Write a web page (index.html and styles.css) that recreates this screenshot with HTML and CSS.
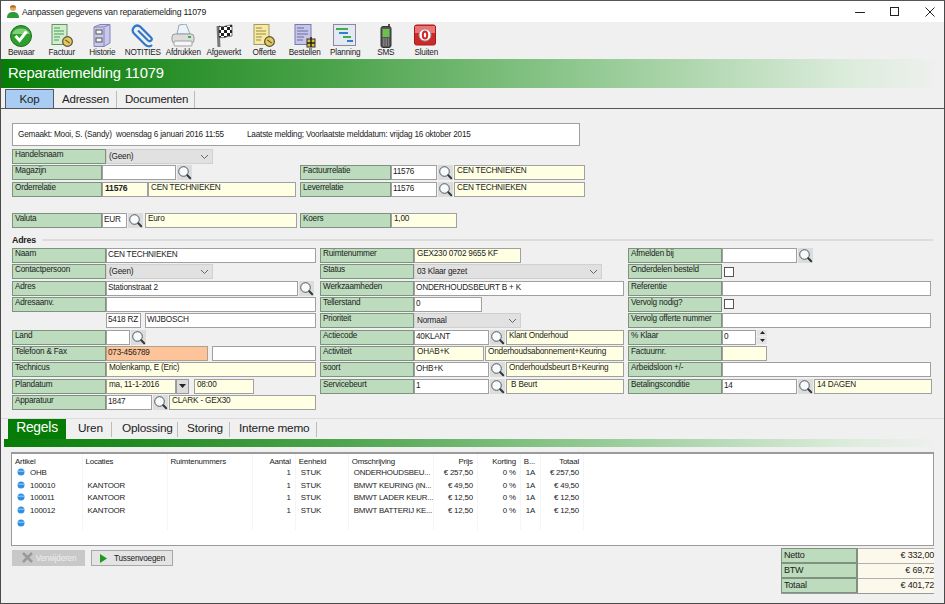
FILE: index.html
```html
<!DOCTYPE html>
<html lang="nl">
<head>
<meta charset="utf-8">
<title>Aanpassen gegevens van reparatiemelding 11079</title>
<link rel="stylesheet" href="styles.css">
</head>
<body>
<svg class="defs" width="0" height="0">
  <defs>
    <symbol id="mag" viewBox="0 0 15 15">
      <circle cx="6.500" cy="6.500" r="4.800" fill="#f6fafc" stroke="#50585c" stroke-width="1"/>
      <path d="M10.300 10.300l2.900 2.900" stroke="#30383c" stroke-width="2" stroke-linecap="round"/>
    </symbol>
    <symbol id="chev" viewBox="0 0 9 6">
      <path d="M1 1l3.500 3.500L8 1" fill="none" stroke="#666" stroke-width="1"/>
    </symbol>
    <symbol id="dot" viewBox="0 0 8 8">
      <circle cx="4" cy="4" r="3.500" fill="#2f8fe6"/>
      <path d="M1 3.200h6" stroke="#9fd0f8" stroke-width="1"/>
    </symbol>
    <symbol id="coin" viewBox="0 0 10 10">
      <circle cx="5" cy="5" r="4.400" fill="#e6c85c" stroke="#54503a" stroke-width="1.100"/>
      <path d="M3 3.500l4 3" stroke="#54503a" stroke-width="1"/>
    </symbol>
    <pattern id="chk" width="6" height="6" patternUnits="userSpaceOnUse">
      <rect width="6" height="6" fill="#fff"/>
      <path d="M0 0h3v3H0zM3 3h3v3H3z" fill="#222"/>
    </pattern>
  </defs>
</svg>
<div class="win">
  <header class="titlebar">
    <svg class="appicon" width="14" height="15" viewBox="0 0 14 15"><circle cx="7" cy="4" r="3" fill="#e0a868"/><path d="M4 3.500C4 .5 10 .5 10 3.500z" fill="#b86a20"/><path d="M1 14c0-5 3-6 6-6s6 1 6 6z" fill="#2f9a3a"/></svg>
    <span class="wintitle">Aanpassen gegevens van reparatiemelding 11079</span>
    <div class="winbtns">
      <svg width="10" height="10" viewBox="0 0 10 10"><path d="M0 5.500h10" stroke="#222"/></svg>
      <svg width="10" height="10" viewBox="0 0 10 10"><rect x=".5" y=".5" width="8" height="8" fill="none" stroke="#222"/></svg>
      <svg width="10" height="10" viewBox="0 0 10 10"><path d="M.5.5l9 9M9.500.5l-9 9" stroke="#222"/></svg>
    </div>
  </header>

  <nav class="toolbar">
    <div class="tool"><svg width="24" height="24" viewBox="0 0 24 24"><circle cx="12" cy="12" r="10.500" fill="#2f9e2f" stroke="#1c701c"/><path d="M3 10a9.500 8 0 0 1 18 0z" fill="#7fd07a"/><path d="M6.500 12l4 4.500 7-9" fill="none" stroke="#fff" stroke-width="3"/></svg><span>Bewaar</span></div>
    <div class="tool"><svg width="24" height="24" viewBox="0 0 24 24"><rect x="2" y=".5" width="15" height="20" fill="#d6ecd2" stroke="#5a9a5a"/><path d="M4 4h6M4 7h10M4 10h10M4 13h6M4 16h5" stroke="#3f9f4f"/><use href="#coin" x="12" y="12" width="11" height="11"/></svg><span>Factuur</span></div>
    <div class="tool"><svg width="24" height="24" viewBox="0 0 24 24"><path d="M4 3l6-2.500h10V19l-6 3.500H4z" fill="#c8c8ee" stroke="#8484b4"/><path d="M14 4v18M4 3h10l6-2.500" fill="none" stroke="#8484b4"/><rect x="6" y="6" width="6" height="4" fill="#f4f4f4" stroke="#555"/><rect x="6" y="14" width="6" height="4" fill="#f4f4f4" stroke="#555"/></svg><span>Historie</span></div>
    <div class="tool"><svg width="24" height="24" viewBox="0 0 24 24"><path d="M21 21.500c-2 2-5 1.500-7-.5L3 10C0 7 3-.5 9 3l11 11c2 2-.5 5-3 3L7 7" transform="translate(0 -.5)" fill="none" stroke="#3278c8" stroke-width="2.200"/></svg><span>NOTITIES</span></div>
    <div class="tool"><svg width="24" height="24" viewBox="0 0 24 24"><path d="M6 10L8 1l7-1 4 10z" fill="#eaf4fb" stroke="#98a8b4"/><rect x="1" y="10" width="22" height="9" rx="3" fill="#dcdcdc" stroke="#9a9a9a"/><rect x="3" y="17" width="18" height="5" rx="1" fill="#f6f6f6" stroke="#a0a0a0"/><rect x="17" y="12" width="3" height="2" fill="#3fb04f"/></svg><span>Afdrukken</span></div>
    <div class="tool"><svg width="24" height="24" viewBox="0 0 24 24"><path d="M6 2l1 21" stroke="#7a7a7a" stroke-width="3"/><path d="M7 2c4 2 8-1 13-1v11c-5 0-9 3-13 1z" fill="url(#chk)" stroke="#333" stroke-width=".7"/></svg><span>Afgewerkt</span></div>
    <div class="tool"><svg width="24" height="24" viewBox="0 0 24 24"><rect x="2" y=".5" width="15" height="20" fill="#f6eaa8" stroke="#a8985a"/><path d="M4 4h6M4 7h10M4 10h10M4 13h6M4 16h5" stroke="#a08a40"/><use href="#coin" x="12" y="12" width="11" height="11"/></svg><span>Offerte</span></div>
    <div class="tool"><svg width="24" height="24" viewBox="0 0 24 24"><rect x="2" y=".5" width="16" height="20" fill="#c6c6e8" stroke="#7a7aa8"/><path d="M4 4h7M4 7h11M4 10h11M4 13h7M4 16h6" stroke="#6a6a9c"/><rect x="14" y="15" width="8" height="8" fill="#e0c030" stroke="#333"/><path d="M18 13v10M14 19h8" stroke="#222" stroke-width="1.500"/></svg><span>Bestellen</span></div>
    <div class="tool"><svg width="24" height="24" viewBox="0 0 24 24"><rect x=".5" y=".5" width="22" height="21" fill="#e4e8f2" stroke="#8a8a9a"/><path d="M3 5h12" stroke="#3cae4a" stroke-width="2"/><path d="M6 9h9" stroke="#3080d0" stroke-width="2"/><path d="M10 13h8" stroke="#3cae4a" stroke-width="2"/><path d="M14 17h6" stroke="#3080d0" stroke-width="2"/></svg><span>Planning</span></div>
    <div class="tool"><svg width="24" height="24" viewBox="0 0 24 24"><path d="M14 0h2v3h-2z" fill="#555"/><rect x="7" y="2.500" width="10" height="21" rx="2" fill="#555" stroke="#333"/><rect x="8.500" y="5" width="7" height="8" fill="#6cc04c"/><path d="M9 15h6M9 17h6M9 19h6M9 21h6" stroke="#aaa" stroke-dasharray="1.500 1"/></svg><span>SMS</span></div>
    <div class="tool"><svg width="24" height="24" viewBox="0 0 24 24"><rect x=".5" y="1" width="21" height="20" rx="2" fill="#d02828" stroke="#a01c1c"/><path d="M1 2h20v7H1z" fill="#ee7474"/><circle cx="11" cy="11" r="6" fill="#fff" stroke="#999"/><ellipse cx="11" cy="11" rx="2.200" ry="3.500" fill="none" stroke="#d02828" stroke-width="2"/></svg><span>Sluiten</span></div>
  </nav>

  <div class="banner">Reparatiemelding 11079</div>

  <div class="tabs">
    <div class="tab on">Kop</div>
    <div class="tab t-adr">Adressen</div>
    <div class="tab t-doc">Documenten</div>
  </div>

  <main class="form">
    <div class="info"><span class="i1">Gemaakt: Mooi, S. (Sandy)</span><span class="i2">woensdag 6 januari 2016 11:55</span><span class="i3">Laatste melding; Voorlaatste melddatum: vrijdag 16 oktober 2015</span></div>

    <div class="top">
      <div class="col">
        <div class="r"><div class="f l w94">Handelsnaam</div><div class="f s w107">(Geen)<svg class="chev"><use href="#chev"/></svg></div></div>
        <div class="r"><div class="f l w90">Magazijn</div><div class="f w w74"></div><div class="m"><svg><use href="#mag"/></svg></div></div>
        <div class="r"><div class="f l w90">Orderrelatie</div><div class="f y w46 b">11576</div><div class="f y w148">CEN TECHNIEKEN</div></div>
        <div class="spacer"></div>
        <div class="r"><div class="f l w90">Valuta</div><div class="f w w25">EUR</div><div class="m"><svg><use href="#mag"/></svg></div><div class="f y w152 ml1">Euro</div></div>
      </div>
      <div class="col">
        <div class="r"></div>
        <div class="r"><div class="f l w91">Factuurrelatie</div><div class="f w w46">11576</div><div class="m"><svg><use href="#mag"/></svg></div><div class="f y w131">CEN TECHNIEKEN</div></div>
        <div class="r"><div class="f l w91">Leverrelatie</div><div class="f w w46">11576</div><div class="m"><svg><use href="#mag"/></svg></div><div class="f y w131">CEN TECHNIEKEN</div></div>
        <div class="spacer"></div>
        <div class="r"><div class="f l w91">Koers</div><div class="f y w66">1,00</div></div>
      </div>
    </div>

    <div class="section"><b>Adres</b><i></i></div>

    <div class="three">
      <div class="col">
        <div class="r"><div class="f l w94">Naam</div><div class="f w w210">CEN TECHNIEKEN</div></div>
        <div class="r"><div class="f l w94">Contactpersoon</div><div class="f s w107">(Geen)<svg class="chev"><use href="#chev"/></svg></div></div>
        <div class="r"><div class="f l w94">Adres</div><div class="f w w192">Stationstraat 2</div><div class="m"><svg><use href="#mag"/></svg></div></div>
        <div class="r"><div class="f l w94">Adresaanv.</div><div class="f w w210"></div></div>
        <div class="r"><div class="blank w94"></div><div class="f w w35">5418 RZ</div><div class="f w w171 ml4">WIJBOSCH</div></div>
        <div class="r"><div class="f l w94">Land</div><div class="f w w24"></div><div class="m"><svg><use href="#mag"/></svg></div></div>
        <div class="r"><div class="f l w94">Telefoon &amp; Fax</div><div class="f o w102">073-456789</div><div class="f w w104 ml4"></div></div>
        <div class="r"><div class="f l w94">Technicus</div><div class="f y w210">Molenkamp, E (Eric)</div></div>
        <div class="r"><div class="f l w94">Plandatum</div><div class="f y w70">ma, 11-1-2016</div><div class="drop"><svg width="7" height="4" viewBox="0 0 7 4"><path d="M0 0h7L3.500 4z" fill="#222"/></svg></div><div class="f y w60 ml5">08:00</div></div>
        <div class="r"><div class="f l w94">Apparatuur</div><div class="f w w46">1847</div><div class="m"><svg><use href="#mag"/></svg></div><div class="f y w147">CLARK - GEX30</div></div>
      </div>
      <div class="col">
        <div class="r"><div class="f l w94">Ruimtenummer</div><div class="f y w107">GEX230 0702 9655 KF</div></div>
        <div class="r"><div class="f l w94">Status</div><div class="f s w188">03 Klaar gezet<svg class="chev"><use href="#chev"/></svg></div></div>
        <div class="r"><div class="f l w94">Werkzaamheden</div><div class="f w w210">ONDERHOUDSBEURT B + K</div></div>
        <div class="r"><div class="f l w94">Tellerstand</div><div class="f w w68">0</div></div>
        <div class="r"><div class="f l w94">Prioriteit</div><div class="f s w107">Normaal<svg class="chev"><use href="#chev"/></svg></div></div>
        <div class="r"><div class="f l w94">Actiecode</div><div class="f w w75">40KLANT</div><div class="m"><svg><use href="#mag"/></svg></div><div class="f y w118">Klant Onderhoud</div></div>
        <div class="r"><div class="f l w94">Activiteit</div><div class="f y w70">OHAB+K</div><div class="f y w139 ml1">Onderhoudsabonnement+Keuring</div></div>
        <div class="r"><div class="f l w94">soort</div><div class="f w w75">OHB+K</div><div class="m"><svg><use href="#mag"/></svg></div><div class="f y w118">Onderhoudsbeurt B+Keuring</div></div>
        <div class="r"><div class="f l w94">Servicebeurt</div><div class="f w w75">1</div><div class="m"><svg><use href="#mag"/></svg></div><div class="f y w118">&nbsp;B Beurt</div></div>
      </div>
      <div class="col">
        <div class="r"><div class="f l w94">Afmelden bij</div><div class="f w w75">&nbsp;</div><div class="m"><svg><use href="#mag"/></svg></div></div>
        <div class="r"><div class="f l w94">Onderdelen besteld</div><div class="chk"></div></div>
        <div class="r"><div class="f l w94">Referentie</div><div class="f w w209"></div></div>
        <div class="r"><div class="f l w94">Vervolg nodig?</div><div class="chk"></div></div>
        <div class="r"><div class="f l w94">Vervolg offerte nummer</div><div class="f w w209"></div></div>
        <div class="r"><div class="f l w94">% Klaar</div><div class="f w w34">0</div><div class="spin"><span><svg width="5" height="3" viewBox="0 0 5 3"><path d="M0 3h5L2.500 0z" fill="#222"/></svg></span><span><svg width="5" height="3" viewBox="0 0 5 3"><path d="M0 0h5L2.500 3z" fill="#222"/></svg></span></div></div>
        <div class="r"><div class="f l w94">Factuurnr.</div><div class="f y w45"></div></div>
        <div class="r"><div class="f l w94">Arbeidsloon +/-</div><div class="f w w209"></div></div>
        <div class="r"><div class="f l w94">Betalingsconditie</div><div class="f w w75">14</div><div class="m"><svg><use href="#mag"/></svg></div><div class="f y w118">14 DAGEN</div></div>
      </div>
    </div>
  </main>

  <section class="lower">
    <div class="ltabs">
      <div class="ltab on">Regels</div>
      <div class="ltab l-uren">Uren</div>
      <div class="ltab l-opl">Oplossing</div>
      <div class="ltab l-sto">Storing</div>
      <div class="ltab l-int">Interne memo</div>
    </div>
    <div class="gbar"></div>
    <div class="grid">
      <table>
        <colgroup><col class="c1"><col class="c2"><col class="c3"><col class="c4"><col class="c5"><col class="c6"><col class="c7"><col class="c8"><col class="c9"><col class="c10"></colgroup>
        <thead><tr><th>Artikel</th><th>Locaties</th><th>Ruimtenummers</th><th class="n">Aantal</th><th>Eenheid</th><th>Omschrijving</th><th class="n">Prijs</th><th class="n">Korting</th><th>B...</th><th class="n">Totaal</th></tr></thead>
        <tbody>
          <tr><td class="first"><svg class="dot"><use href="#dot"/></svg>OHB</td><td></td><td></td><td class="n">1</td><td>STUK</td><td>ONDERHOUDSBEU...</td><td class="n">€ 257,50</td><td class="n">0 %</td><td>1A</td><td class="n">€ 257,50</td></tr>
          <tr><td class="first"><svg class="dot"><use href="#dot"/></svg>100010</td><td>KANTOOR</td><td></td><td class="n">1</td><td>STUK</td><td>BMWT KEURING (IN...</td><td class="n">€ 49,50</td><td class="n">0 %</td><td>1A</td><td class="n">€ 49,50</td></tr>
          <tr><td class="first"><svg class="dot"><use href="#dot"/></svg>100011</td><td>KANTOOR</td><td></td><td class="n">1</td><td>STUK</td><td>BMWT LADER KEUR...</td><td class="n">€ 12,50</td><td class="n">0 %</td><td>1A</td><td class="n">€ 12,50</td></tr>
          <tr><td class="first"><svg class="dot"><use href="#dot"/></svg>100012</td><td>KANTOOR</td><td></td><td class="n">1</td><td>STUK</td><td>BMWT BATTERIJ KE...</td><td class="n">€ 12,50</td><td class="n">0 %</td><td>1A</td><td class="n">€ 12,50</td></tr>
          <tr><td class="first"><svg class="dot"><use href="#dot"/></svg></td><td></td><td></td><td></td><td></td><td></td><td></td><td></td><td></td><td></td></tr>
        </tbody>
      </table>
    </div>
    <div class="foot">
      <div class="btn off"><svg width="13" height="12" viewBox="0 0 13 12"><path d="M2 1l9 9M11 1L2 10" stroke="#9a9a9a" stroke-width="2.500"/></svg>Verwijderen</div>
      <div class="btn"><svg width="9" height="9" viewBox="0 0 9 9"><path d="M1 0l7 4.500L1 9z" fill="#1f9a1f"/></svg>Tussenvoegen</div>
      <div class="totals">
        <div class="tr"><div class="tl">Netto</div><div class="tv">€ 332,00</div></div>
        <div class="tr"><div class="tl">BTW</div><div class="tv">€ 69,72</div></div>
        <div class="tr"><div class="tl">Totaal</div><div class="tv">€ 401,72</div></div>
      </div>
    </div>
  </section>
</div>
</body>
</html>
```

FILE: styles.css
```css
* { box-sizing: border-box; }
html, body { margin: 0; padding: 0; }
body { font-family: "Liberation Sans", Arial, sans-serif; font-size: 8.200px; letter-spacing: -.2px; color: #222; background: #f0f0f0; overflow: hidden; }
.defs { position: absolute; }
.win { width: 945px; height: 604px; border: 1px solid #4a4a4a; border-top-color: #555; display: flex; flex-direction: column; background: #f0f0f0; overflow: hidden; }

.titlebar { height: 21px; flex: none; background: #fff; display: flex; align-items: center; padding-left: 5px; }
.appicon { margin-right: 2px; flex: none; }
.wintitle { font-size: 8.700px; color: #222; }
.winbtns { margin-left: auto; display: flex; gap: 25px; padding-right: 9px; }

.toolbar { height: 37px; flex: none; display: flex; background: #f0f0f0; padding-top: 2px; }
.tool { width: 40.500px; flex: none; display: flex; flex-direction: column; align-items: center; }
.tool svg { flex: none; height: 24px; width: 24px; display: block; }
.tool span { white-space: nowrap; font-size: 8.200px; line-height: 10px; }

.banner { height: 29px; flex: none; background: linear-gradient(90deg, #067c06 0%, #4ba34b 35%, #8cc68c 60%, #dcecdc 90%, #f0f0f0 100%); color: #fff; font-size: 14.800px; line-height: 28px; padding-left: 7px; white-space: nowrap; }

.tabs { height: 21px; flex: none; display: flex; align-items: flex-end; border-bottom: 1px solid #555; padding-left: 4px; font-size: 11.500px; color: #222; }
.tab { height: 17px; line-height: 16px; }
.tab.on { width: 49px; height: 19px; line-height: 19px; background: #a9cdf2; border: 1px solid #556; border-bottom: 0; text-align: center; }
.t-adr { margin-left: 8px; padding-right: 7px; border-right: 1px solid #bbb; width: 55px; }
.t-doc { margin-left: 8px; padding-right: 7px; border-right: 1px solid #bbb; width: 70px; }

.form { flex: none; padding: 14px 0 0 11px; height: 309px; }
.info { width: 568px; height: 23px; background: #fff; border: 1px solid #a0a0a0; line-height: 21px; padding-left: 5px; margin-bottom: 3px; display: flex; white-space: nowrap; }
.i1 { width: 98px; }
.i2 { width: 131px; }

.top { display: grid; grid-template-columns: 288px 1fr; }
.three { display: grid; grid-template-columns: 308px 308px 308px; }
.col { display: flex; flex-direction: column; }
.r { display: flex; height: 16.330px; align-items: flex-start; }
.spacer { height: 15px; }
.section { height: 18.700px; width: 921px; display: flex; align-items: center; gap: 6px; padding-top: 3px; }
.section b { font-size: 8.800px; }
.section i { flex: 1; height: 2px; background: #dcdcdc; display: block; }

.f { height: 15px; border: 1px solid #9a9a9a; line-height: 12px; padding-left: 1px; overflow: hidden; white-space: nowrap; flex: none; position: relative; }
.l { background: #bddbbd; border-color: #7f917f; line-height: 10px; padding-left: 2px; }
.w { background: #fff; border-color: #a0a0a0; }
.y { background: #ffffe4; border-color: #a0a0a0; line-height: 10px; padding-left: 2px; }
.o { background: #fdc49a; border-color: #b0a090; }
.s { background: #e1e1e1; border-color: #d0d0d0; padding-left: 2px; line-height: 14px; }
.b { font-weight: 700; font-size: 8.600px; }
.blank { flex: none; }
.chev { position: absolute; right: 3px; top: 4px; width: 9px; height: 6px; }
.m { width: 15px; height: 15px; background: #dcdcdc; margin: 0 1px; flex: none; }
.m svg { width: 15px; height: 15px; display: block; }
.drop { width: 13px; height: 15px; background: #dcdcdc; border: 1px solid #999; flex: none; display: flex; align-items: center; justify-content: center; }
.chk { width: 10px; height: 10px; border: 1px solid #555; background: #fff; margin: 2.500px 0 0 2px; flex: none; }
.spin { width: 10px; height: 14px; margin-left: 1px; display: flex; flex-direction: column; gap: 1px; flex: none; }
.spin span { height: 6.500px; background: #e4e4e4; display: flex; align-items: center; justify-content: center; }
.spin svg { display: block; }

.ml1 { margin-left: 1px; }
.ml4 { margin-left: 4px; }
.ml5 { margin-left: 5px; }
.w24 { width: 24px; } .w25 { width: 25px; } .w34 { width: 34px; } .w35 { width: 35px; }
.w45 { width: 45px; } .w46 { width: 46px; } .w60 { width: 60px; } .w66 { width: 66px; }
.w68 { width: 68px; } .w70 { width: 70px; } .w74 { width: 74px; } .w75 { width: 75px; }
.w90 { width: 90px; } .w91 { width: 91px; } .w94 { width: 94px; } .w102 { width: 102px; }
.w104 { width: 104px; } .w107 { width: 107px; } .w118 { width: 118px; } .w131 { width: 131px; }
.w139 { width: 139px; } .w147 { width: 147px; } .w148 { width: 148px; } .w152 { width: 152px; }
.w171 { width: 171px; } .w188 { width: 188px; } .w192 { width: 192px; } .w209 { width: 209px; } .w210 { width: 210px; }

.lower { flex: 1; display: flex; flex-direction: column; min-height: 0; }
.ltabs { height: 21px; flex: none; display: flex; align-items: flex-end; border-top: 1px solid #dcdcdc; padding-left: 7px; font-size: 11.800px; color: #222; }
.ltab { height: 15px; line-height: 13px; margin-bottom: 2px; white-space: nowrap; border-right: 1px solid #bbb; }
.ltab.on { width: 58px; height: 20px; line-height: 18px; background: #067c06; color: #fff; font-size: 13.800px; text-align: center; margin-bottom: 0; border: 0; }
.l-uren { margin-left: 12px; width: 34px; }
.l-opl { margin-left: 10px; width: 56px; }
.l-sto { margin-left: 9px; width: 43px; }
.l-int { margin-left: 9px; width: 78px; }
.gbar { height: 8px; flex: none; margin: 0 3px; background: linear-gradient(90deg, #067c06 0%, #4ba34b 35%, #8cc68c 60%, #dcecdc 90%, #f0f0f0 100%); }

.grid { margin: 5px 10px 0 10px; height: 94px; flex: none; background: #fff; border: 1px solid #9a9a9a; border-top-width: 2px; overflow: hidden; }
table { border-collapse: collapse; table-layout: fixed; width: 572px; font-size: 7.900px; }
.c1 { width: 70px; } .c2 { width: 85px; } .c3 { width: 85px; } .c4 { width: 43px; } .c5 { width: 53px; }
.c6 { width: 85px; } .c7 { width: 44px; } .c8 { width: 43px; } .c9 { width: 20px; } .c10 { width: 43px; }
th, td { height: 12.700px; padding: 0 0 0 5px; line-height: 12px; font-weight: 400; text-align: left; white-space: nowrap; overflow: hidden; border-right: 1px solid #f5f5f5; }
th { padding-left: 3px; padding-top: 1.700px; line-height: 11px; }
.n { text-align: right; padding-right: 4px; }
.dot { width: 8px; height: 8px; margin-right: 5px; vertical-align: -1px; }

.foot { flex: 1; display: flex; align-items: flex-start; padding-left: 11px; }
.btn { width: 82px; height: 16px; margin: 4px 0 0 6px; background: #e4e4e4; border: 1px solid #a8a8a8; display: flex; align-items: center; justify-content: center; gap: 6px; font-size: 8.200px; white-space: nowrap; }
.btn.off { width: 73px; margin-left: 0; background: #c8c8c8; border-color: #c8c8c8; color: #eee; gap: 2px; }
.totals { margin: 2px 10px 0 auto; width: 153px; border-bottom: 1px solid #999; }
.tr { display: flex; height: 15px; line-height: 13px; font-size: 9px; }
.tl { width: 77px; background: #bddbbd; border: 1px solid #7f917f; border-width: 1px 2px 1px 1px; padding-left: 2px; }
.tv { flex: 1; background: #fdf8ec; border-top: 1px solid #b0b0b0; text-align: right; }
```
